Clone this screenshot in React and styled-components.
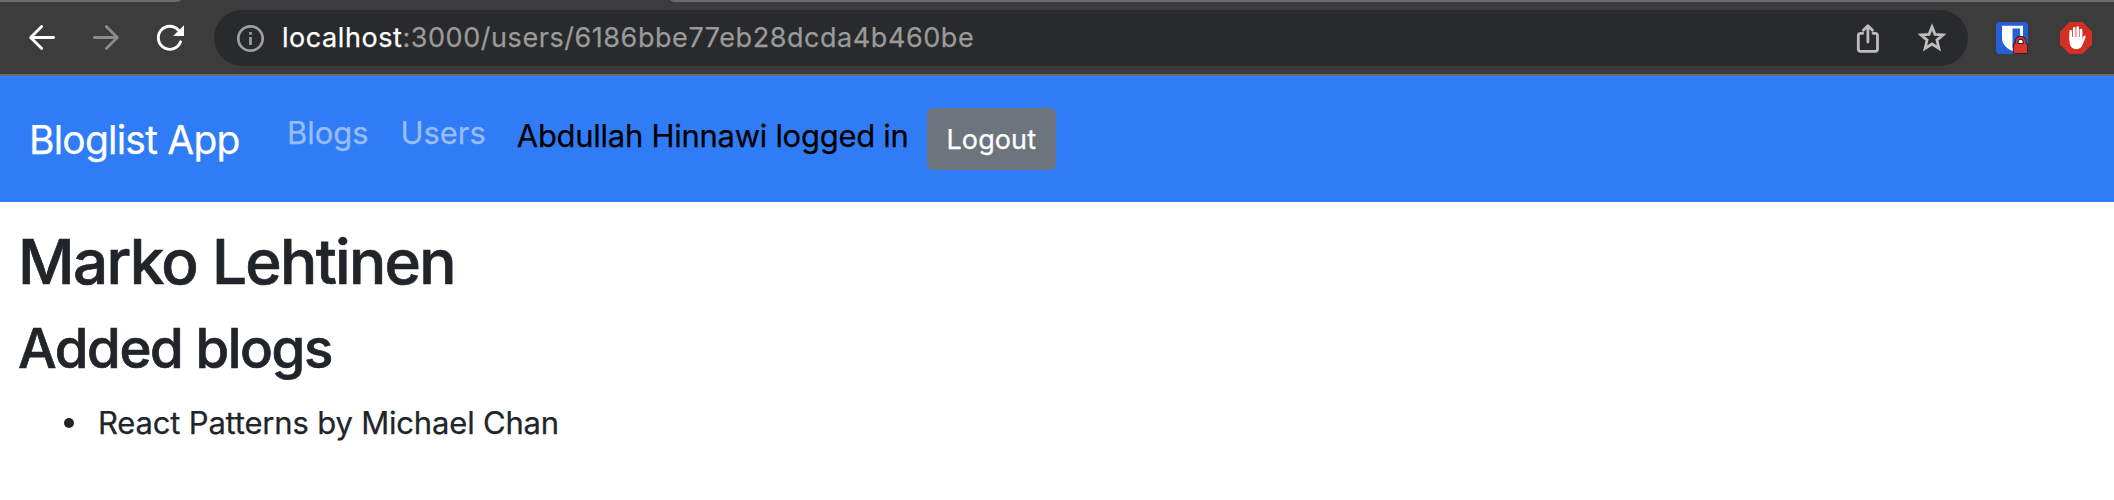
import React from "react";
import styled, { createGlobalStyle } from "styled-components";

const GlobalStyle = createGlobalStyle`
  *, *::before, *::after { box-sizing: border-box; }
  body {
    margin: 0;
    background: #fff;
    color: #212529;
    font-family: Inter, "Liberation Sans", sans-serif;
    font-size: 31px;
    -webkit-text-stroke: 0.25px currentColor;
    line-height: 48px;
  }
  h1, h2, ul { margin: 0; padding: 0; }
`;

const BrowserBar = styled.header`
  height: 76px;
  background: #3c3c3c;
  border-bottom: 2px solid #6b6b6b;
`;
const TabStrip = styled.div`
  display: flex;
  justify-content: space-between;
  height: 2px;
`;
const TabEdge = styled.div`
  width: ${(p) => p.$width};
  background: #6b6b6b;
  border-radius: ${(p) => (p.$side === "left" ? "0 0 8px 0 / 0 0 2px 0" : "0 0 0 8px / 0 0 0 2px")};
`;
const Toolbar = styled.div`
  display: flex;
  align-items: center;
  height: 72px;
  padding: 0 22px 0 26px;
`;
const IconGroup = styled.div`
  display: flex;
  gap: 32px;
`;
const Icon = styled.svg`
  display: block;
  flex: none;
  width: 32px;
  height: 32px;
  color: ${(p) => p.$color};
`;
const AddressBar = styled.div`
  flex: 1;
  display: flex;
  align-items: center;
  height: 56px;
  margin: 0 28px;
  padding: 0 20px;
  border-radius: 28px;
  background: #292a2c;
`;
const Url = styled.span`
  flex: 1;
  margin-left: 16px;
  font-size: 27px;
  letter-spacing: 0.56px;
  color: #9a9a9b;
`;
const Host = styled.span`
  color: #fff;
  -webkit-text-stroke-color: #fff;
`;

const Navbar = styled.nav`
  display: flex;
  align-items: center;
  height: 126px;
  padding: 0 28px;
  background: #307cf6;
`;
const Brand = styled.span`
  width: 243px;
  padding: 1px 0 0 1px;
  font-size: 39px;
  line-height: 60px;
  letter-spacing: -0.8px;
  color: #fff;
`;
const Links = styled.div`
  display: flex;
  align-items: flex-start;
  height: 62px;
`;
const NavLink = styled.span`
  padding: 1px 16px 0;
  letter-spacing: -0.05px;
  color: #97bdfa;
`;
const Status = styled.span`
  width: 396px;
  margin: 4px 0 0 15px;
  letter-spacing: -0.28px;
  white-space: nowrap;
  color: #000;
`;
const LogoutButton = styled.button`
  width: 129px;
  height: 62px;
  margin-left: 14px;
  padding: 1px 0 0;
  border: 0;
  border-radius: 6px;
  background: #6c757d;
  color: #fff;
  font: 27px/42px Inter, "Liberation Sans", sans-serif;
  letter-spacing: 0.1px;
`;

const Content = styled.main`
  padding: 22px 18px;
`;
const Title = styled.h1`
  margin-bottom: 15px;
  font-size: 62px;
  line-height: 76px;
  font-weight: 500;
  letter-spacing: -1.68px;
  -webkit-text-stroke-width: 0.7px;
`;
const Subtitle = styled.h2`
  margin-bottom: 17px;
  font-size: 54.5px;
  line-height: 67px;
  font-weight: 500;
  letter-spacing: -1.4px;
  -webkit-text-stroke-width: 0.7px;
`;
const BlogList = styled.ul`
  padding-left: 46px;
  list-style: none;
`;
const BlogItem = styled.li`
  display: flex;
  align-items: center;
  gap: 24px;
  letter-spacing: -0.18px;

  &::before {
    content: "";
    width: 10px;
    height: 10px;
    border-radius: 50%;
    background: #212529;
  }
`;

const BackIcon = () => (
  <Icon $color="#fff" viewBox="0 0 32 32" fill="none" stroke="currentColor" strokeWidth="2.8" strokeLinecap="round" strokeLinejoin="round">
    <path d="M27.6 15.5H5M15.7 4.4 4.6 15.5 15.7 26.6" />
  </Icon>
);
const ForwardIcon = () => (
  <Icon $color="#8b8b8b" viewBox="0 0 32 32" fill="none" stroke="currentColor" strokeWidth="2.8" strokeLinecap="round" strokeLinejoin="round">
    <path d="M4.4 15.5H27M16.3 4.4 27.4 15.5 16.3 26.6" />
  </Icon>
);
const ReloadIcon = () => (
  <Icon $color="#fff" viewBox="0 0 32 32" fill="none" stroke="currentColor" strokeWidth="2.9" strokeLinecap="round">
    <path d="M26.6 19.8A11.5 11.5 0 1 1 24.6 8.4" />
    <path d="M30 3.2V14H19.2Z" fill="currentColor" stroke="none" />
  </Icon>
);
const InfoIcon = () => (
  <Icon $color="#9aa0a6" viewBox="0 0 32 32" fill="none" stroke="currentColor" strokeWidth="2.7">
    <circle cx="16.5" cy="16.5" r="12.2" />
    <path d="M16.5 15V23M16.5 10V12.7" />
  </Icon>
);
const ShareIcon = () => (
  <Icon $color="#bdbdbe" viewBox="0 0 32 32" fill="none" stroke="currentColor" strokeWidth="2.8" strokeLinecap="round" strokeLinejoin="round">
    <path d="M10.8 11.3H8.6Q6.3 11.3 6.3 13.6V27Q6.3 29.3 8.6 29.3H23.2Q25.5 29.3 25.5 27V13.6Q25.5 11.3 23.2 11.3H21" />
    <path d="M15.9 20V4M11.3 8.2 15.9 3.7 20.5 8.2" />
  </Icon>
);
const StarIcon = () => (
  <Icon $color="#bdbdbe" viewBox="0 0 32 32" fill="none" stroke="currentColor" strokeWidth="2.8" strokeLinejoin="miter">
    <path d="M16 4.9 19 12.3 27 12.9 20.9 18.1 22.9 26.4 16 22 9.1 26.4 11.1 18.1 5 12.9 13 12.3Z" />
  </Icon>
);
const VaultIcon = () => (
  <Icon viewBox="0 0 32 32">
    <rect width="32" height="32" rx="4" fill="#2760d6" />
    <path d="M6 3.7H27V16C27 23 21 27 16.5 29.3C12 27 6 23 6 16Z" fill="#fff" />
    <path d="M16.5 6.4H24V16C24 21 20.5 23.8 16.5 26Z" fill="#2760d6" />
    <path d="M20.6 23V19.8a4 4 0 0 1 8 0V23" fill="#fff" stroke="#202020" strokeWidth="4" />
    <rect x="17.3" y="21.6" width="14.4" height="10" rx="1.4" fill="#dc3531" stroke="#202020" strokeWidth="1" />
    <path d="M20.6 22.6V19.8a4 4 0 0 1 8 0v2.8" fill="none" stroke="#dc3531" strokeWidth="2" />
  </Icon>
);
const BlockerIcon = () => (
  <Icon viewBox="0 0 32 32">
    <path d="M9.5 0H22.5L32 9.5V22.5L22.5 32H9.5L0 22.5V9.5Z" fill="#d32f22" />
    <g stroke="#fff" strokeWidth="2.7" strokeLinecap="round" fill="none">
      <path d="M10.7 17V9.3M14.2 16V6.3M17.7 16V5.6M21 17V8" />
    </g>
    <path d="M9.4 15H22.3V18.3L23 15.2Q23.6 13.3 25 13.5Q26 13.9 25.5 15.4L22.7 22.6Q21 27.2 16.2 27.2Q9.4 27 9.4 18Z" fill="#fff" />
  </Icon>
);

export default function App() {
  return (
    <>
      <GlobalStyle />
      <BrowserBar>
        <TabStrip>
          <TabEdge $width="181px" $side="left" />
          <TabEdge $width="1444px" $side="right" />
        </TabStrip>
        <Toolbar>
          <IconGroup>
            <BackIcon />
            <ForwardIcon />
            <ReloadIcon />
          </IconGroup>
          <AddressBar>
            <InfoIcon />
            <Url>
              <Host>localhost</Host>:3000/users/6186bbe77eb28dcda4b460be
            </Url>
            <IconGroup>
              <ShareIcon />
              <StarIcon />
            </IconGroup>
          </AddressBar>
          <IconGroup>
            <VaultIcon />
            <BlockerIcon />
          </IconGroup>
        </Toolbar>
      </BrowserBar>
      <Navbar>
        <Brand>Bloglist App</Brand>
        <Links>
          <NavLink>Blogs</NavLink>
          <NavLink>Users</NavLink>
          <Status>Abdullah Hinnawi logged in</Status>
          <LogoutButton>Logout</LogoutButton>
        </Links>
      </Navbar>
      <Content>
        <Title>Marko Lehtinen</Title>
        <Subtitle>Added blogs</Subtitle>
        <BlogList>
          <BlogItem>React Patterns by Michael Chan</BlogItem>
        </BlogList>
      </Content>
    </>
  );
}
